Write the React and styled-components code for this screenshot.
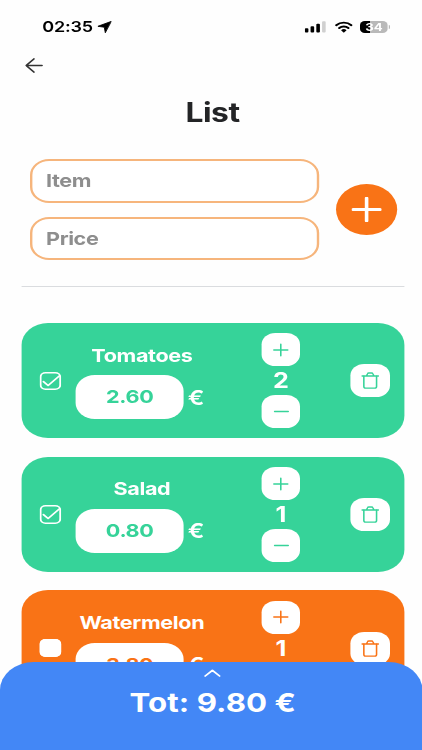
import React, { useState } from "react";
import styled, { createGlobalStyle } from "styled-components";

const GlobalStyle = createGlobalStyle`
  body {
    margin: 0;
    background: #fefefe;
    overflow: hidden;
  }

  * {
    box-sizing: border-box;
  }

  svg {
    display: block;
    flex-shrink: 0;
    fill: none;
    stroke: currentColor;
    stroke-linecap: round;
    stroke-linejoin: round;
  }
`;

const Screen = styled.div`
  position: relative;
  width: 351.67px;
  height: 750px;
  overflow: hidden;
  transform: scaleX(1.2);
  transform-origin: 0 0;
  font-family: Inter, "Liberation Sans", sans-serif;
  color: #232426;
`;

const StatusBar = styled.div`
  display: flex;
  align-items: center;
  justify-content: space-between;
  height: 54px;
  padding: 0 26.6px 0 35.2px;
  color: #000;
`;

const StatusGroup = styled.div`
  display: flex;
  align-items: center;
  gap: ${props => props.$gap}px;
`;

const Time = styled.span`
  font-size: 15px;
  font-weight: 600;
  letter-spacing: -0.15px;
  line-height: 18px;
`;

const BatteryWrap = styled.div`
  display: flex;
  align-items: center;
  gap: 0.5px;
`;

const Battery = styled.div`
  display: flex;
  align-items: center;
  justify-content: center;
  width: 23px;
  height: 12px;
  border-radius: 4px;
  background: linear-gradient(90deg, #000 35%, #b9b9b9 35%);
  color: #fff;
  font-size: 11px;
  font-weight: 700;
  line-height: 12px;
`;

const BatteryTip = styled.div`
  width: 1.4px;
  height: 4px;
  border-radius: 0 2px 2px 0;
  background: #b9b9b9;
`;

const BackButton = styled.button`
  display: block;
  margin: 4px 0 0 21.4px;
  padding: 0;
  border: 0;
  background: none;
  color: #333;
`;

const Title = styled.h1`
  margin: 23px 0 0;
  padding-left: 2.6px;
  font-size: 26.5px;
  font-weight: 700;
  letter-spacing: -0.4px;
  line-height: 33px;
  text-align: center;
`;

const Form = styled.div`
  display: flex;
  align-items: center;
  gap: 13.6px;
  padding: 30.2px 0 0 25.4px;
`;

const Fields = styled.div`
  display: flex;
  flex-direction: column;
  gap: 14.4px;
`;

const Field = styled.input`
  width: 241px;
  height: 43.4px;
  padding: 0 11px;
  border: 2px solid #f6b57c;
  border-radius: 16px;
  background: #fff;
  font: 700 18px Inter, "Liberation Sans", sans-serif;
  letter-spacing: -0.35px;
  outline: none;

  &::placeholder {
    color: #8e8e8e;
    opacity: 1;
  }
`;

const AddButton = styled.button`
  display: flex;
  align-items: center;
  justify-content: center;
  width: 50.8px;
  height: 51px;
  padding: 0;
  border: 0;
  border-radius: 50%;
  background: #f97316;
  color: #fff;
`;

const Divider = styled.hr`
  width: 319px;
  height: 1px;
  margin: 25.6px 0 36px 18.3px;
  border: 0;
  background: #dadcdf;
`;

const List = styled.div`
  display: flex;
  flex-direction: column;
  gap: 18.2px;
  padding-left: 18.4px;
`;

const Card = styled.div`
  display: flex;
  align-items: center;
  flex-shrink: 0;
  width: 319px;
  height: 115.5px;
  padding-left: 14.2px;
  border-radius: 22px;
  background: ${props => props.$color};
  color: ${props => props.$color};
`;

const Check = styled.button`
  display: flex;
  align-items: center;
  justify-content: center;
  width: 18.2px;
  height: 18.4px;
  padding: 0;
  border: 0;
  border-radius: 5px;
  box-shadow: inset 0 0 0 1.6px #fff;
  background: ${props => (props.$checked ? "transparent" : "#fff")};
  color: #fff;
`;

const Details = styled.div`
  width: 111px;
  height: 72px;
  margin-left: 12px;
`;

const Name = styled.div`
  color: #fff;
  font-size: 18px;
  font-weight: 700;
  letter-spacing: -0.3px;
  line-height: 22.6px;
  text-align: center;
  white-space: nowrap;
`;

const PriceRow = styled.div`
  display: flex;
  align-items: center;
  gap: 3px;
  margin-top: 8px;
`;

const Price = styled.div`
  width: 90.6px;
  height: 43.6px;
  border-radius: 16px;
  background: #fff;
  font-size: 18px;
  font-weight: 700;
  letter-spacing: -0.3px;
  line-height: 44.6px;
  text-align: center;
`;

const Currency = styled.span`
  color: #fff;
  font-size: 20.5px;
  font-weight: 600;
`;

const Stepper = styled.div`
  display: flex;
  flex-direction: column;
  align-items: center;
  width: 32.8px;
  margin-left: 43.9px;
`;

const Count = styled.span`
  height: 28.6px;
  color: #fff;
  font-size: 21px;
  font-weight: 700;
  line-height: 30.2px;
`;

const Chip = styled.button`
  display: flex;
  align-items: center;
  justify-content: center;
  width: 32.6px;
  height: 33px;
  padding: 0;
  border: 0;
  border-radius: 11.5px;
  background: #fff;
  color: inherit;
`;

const DeleteChip = styled(Chip)`
  margin-left: 41.5px;
`;

const Total = styled.div`
  position: absolute;
  left: 0;
  right: 0;
  bottom: 0;
  display: flex;
  flex-direction: column;
  align-items: center;
  height: 88px;
  padding: 7px 0 0 3px;
  border-radius: 28px 28px 0 0;
  background: #4387f6;
  color: #fff;
`;

const TotalText = styled.div`
  margin-top: 9.8px;
  font-size: 26px;
  font-weight: 700;
  letter-spacing: 0.05px;
  line-height: 32px;
  white-space: nowrap;
`;

const LocationIcon = () => (
  <svg width="12" height="12" viewBox="0 0 12 12">
    <path d="M11.5 .5L.6 5.3l5.3.9.8 5.2z" fill="currentColor" strokeWidth=".8" />
  </svg>
);

const SignalIcon = () => (
  <svg width="18" height="12" viewBox="0 0 18 12">
    <rect x="0" y="7.2" width="3" height="4.3" rx=".9" fill="#000" stroke="none" />
    <rect x="4.8" y="5.2" width="3" height="6.3" rx=".9" fill="#000" stroke="none" />
    <rect x="9.6" y="2.8" width="3" height="8.7" rx=".9" fill="#000" stroke="none" />
    <rect x="14.4" y=".2" width="3" height="11.3" rx=".9" fill="#d0d0d0" stroke="none" />
  </svg>
);

const WifiIcon = () => (
  <svg width="15" height="12" viewBox="0 0 15 12" strokeWidth="1.9">
    <path d="M1.2 4.2a9.1 9.1 0 0 1 12.6 0" />
    <path d="M3.7 7a5.6 5.6 0 0 1 7.6 0" />
    <path d="M5.2 9.3a3.2 3.2 0 0 1 4.6 0L7.5 11.7z" fill="#000" stroke="none" />
  </svg>
);

const PlusIcon = ({ size, weight }) => (
  <svg width={size} height={size} viewBox={`0 0 ${size} ${size}`} strokeWidth={weight}>
    <path d={`M${size / 2} 1.2v${size - 2.4}M1.2 ${size / 2}h${size - 2.4}`} />
  </svg>
);

const MinusIcon = () => (
  <svg width="13" height="13" viewBox="0 0 13 13" strokeWidth="1.3">
    <path d="M.8 6.5h11.4" />
  </svg>
);

const TrashIcon = () => (
  <svg width="15" height="17" viewBox="0 0 15 17" strokeWidth="1.3">
    <path d="M.7 4h13.6M4.5 3.8L5.2 1.9Q5.5 1 6.4 1h2.2q.9 0 1.2.9l.7 1.9" />
    <path d="M2.2 4.2v10.3q0 1.7 1.5 1.7h7.6q1.5 0 1.5-1.7V4.2" />
  </svg>
);

const items = [
  { name: "Tomatoes", price: 2.6, count: 2, checked: true },
  { name: "Salad", price: 0.8, count: 1, checked: true },
  { name: "Watermelon", price: 3.8, count: 1, checked: false }
];

const Item = ({ item, onCount, onToggle, onDelete }) => (
  <Card $color={item.checked ? "#36d399" : "#f97316"}>
    <Check $checked={item.checked} onClick={onToggle}>
      {item.checked && (
        <svg width="18" height="18" viewBox="0 0 18 18" strokeWidth="1.6">
          <path d="M3.2 9.6l3.9 3.9 9-9.3" />
        </svg>
      )}
    </Check>
    <Details>
      <Name>{item.name}</Name>
      <PriceRow>
        <Price>{item.price.toFixed(2)}</Price>
        <Currency>€</Currency>
      </PriceRow>
    </Details>
    <Stepper>
      <Chip onClick={() => onCount(1)}>
        <PlusIcon size={14} weight={1.3} />
      </Chip>
      <Count>{item.count}</Count>
      <Chip onClick={() => onCount(-1)}>
        <MinusIcon />
      </Chip>
    </Stepper>
    <DeleteChip onClick={onDelete}>
      <TrashIcon />
    </DeleteChip>
  </Card>
);

const App = () => {
  const [list, setList] = useState(items);
  const update = (name, change) =>
    setList(list.map(item => (item.name === name ? { ...item, ...change } : item)));
  const total = list.reduce((sum, item) => sum + item.price * item.count, 0);

  return (
    <>
      <GlobalStyle />
      <Screen>
        <StatusBar>
          <StatusGroup $gap={4}>
            <Time>02:35</Time>
            <LocationIcon />
          </StatusGroup>
          <StatusGroup $gap={6.5}>
            <SignalIcon />
            <WifiIcon />
            <BatteryWrap>
              <Battery>34</Battery>
              <BatteryTip />
            </BatteryWrap>
          </StatusGroup>
        </StatusBar>
        <BackButton>
          <svg width="15" height="15" viewBox="0 0 15 15" strokeWidth="1.5">
            <path d="M14 7.5H.8M7.2.9L.8 7.5l6.4 6.6" />
          </svg>
        </BackButton>
        <Title>List</Title>
        <Form>
          <Fields>
            <Field placeholder="Item" />
            <Field placeholder="Price" />
          </Fields>
          <AddButton>
            <PlusIcon size={25} weight={3} />
          </AddButton>
        </Form>
        <Divider />
        <List>
          {list.map(item => (
            <Item
              key={item.name}
              item={item}
              onCount={step => update(item.name, { count: Math.max(1, item.count + step) })}
              onToggle={() => update(item.name, { checked: !item.checked })}
              onDelete={() => setList(list.filter(other => other !== item))}
            />
          ))}
        </List>
        <Total>
          <svg width="14" height="8" viewBox="0 0 14 8" strokeWidth="1.7">
            <path d="M1 7l6-5.6L13 7" />
          </svg>
          <TotalText>Tot: {total.toFixed(2)} €</TotalText>
        </Total>
      </Screen>
    </>
  );
};

export default App;
